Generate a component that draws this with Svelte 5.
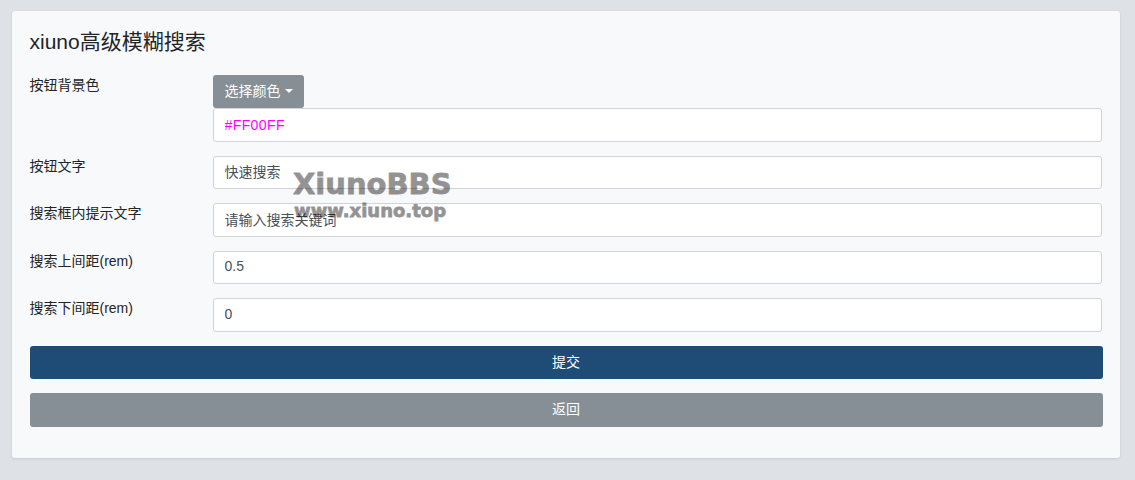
<script lang="ts">
	const fields = [
		{ label: '按钮文字', value: '快速搜索' },
		{ label: '搜索框内提示文字', value: '请输入搜索关键词' },
		{ label: '搜索上间距(rem)', value: '0.5' },
		{ label: '搜索下间距(rem)', value: '0' }
	];
</script>

<div class="page">
	<div class="card">
		<h4>xiuno高级模糊搜索</h4>
		<div class="row">
			<label for="color">按钮背景色</label>
			<div>
				<button class="btn secondary picker" type="button">选择颜色<span class="caret"></span></button>
				<input id="color" class="color" type="text" value="#FF00FF" />
			</div>
		</div>
		{#each fields as field, i}
			<div class="row">
				<label for={`field-${i}`}>{field.label}</label>
				<input id={`field-${i}`} type="text" value={field.value} />
			</div>
		{/each}
		<button class="btn primary block" type="button">提交</button>
		<button class="btn secondary block" type="button">返回</button>
	</div>
	<div class="watermark">
		<div class="wm-big">XiunoBBS</div>
		<div class="wm-small">www.xiuno.top</div>
	</div>
</div>

<style>
	:global(body) {
		margin: 0;
		background: #dee2e6;
	}

	.page {
		position: relative;
		padding: 11px 15px 0 12px;
		height: 469px;
		overflow: hidden;
		font-family: "Liberation Sans", "Noto Sans CJK SC", sans-serif;
		font-size: 14px;
		line-height: 1.5;
		color: #212529;
	}

	.card {
		background: #f8f9fa;
		border-radius: 3px;
		padding: 17.5px 17.5px 31.5px;
		box-shadow: 0 1px 3px rgba(0, 0, 0, 0.1);
	}

	h4 {
		margin: 0 0 21px;
		font-size: 21px;
		font-weight: 400;
		line-height: 1.2;
	}

	.row {
		display: grid;
		grid-template-columns: 183.5px 1fr;
		margin: 0 0.75px 14px 0;
	}

	input {
		display: block;
		box-sizing: border-box;
		width: 100%;
		height: 33.5px;
		padding: 4.25px 10.5px 6.25px;
		border: 1px solid #ced4da;
		border-radius: 3px;
		background: #fff;
		color: #495057;
		font: inherit;
		outline: none;
	}

	.color {
		padding: 5.25px 10.5px;
		color: #ff00ff;
		letter-spacing: 0.4px;
	}

	.btn {
		box-sizing: border-box;
		height: 33.5px;
		padding: 5.25px 10.5px;
		border: 1px solid transparent;
		border-radius: 3px;
		color: #fff;
		font: inherit;
		text-align: center;
	}

	.picker {
		display: block;
		width: 91px;
		white-space: nowrap;
	}

	.caret {
		display: inline-block;
		margin-left: 4px;
		vertical-align: 3px;
		border-top: 4.9px solid #fff;
		border-left: 4.9px solid transparent;
		border-right: 4.9px solid transparent;
	}

	.secondary {
		background: #868e96;
	}

	.primary {
		background: #1f4b77;
	}

	.block {
		display: block;
		width: 100%;
		margin-bottom: 14px;
	}

	.block:last-child {
		margin-bottom: 0;
	}

	.watermark {
		position: absolute;
		left: 293px;
		top: 167px;
		font-family: "DejaVu Sans", sans-serif;
		font-weight: 700;
		color: #000;
		opacity: 0.42;
		-webkit-text-stroke: 0.8px #000;
		pointer-events: none;
		white-space: nowrap;
	}

	.wm-big {
		font-size: 29px;
		line-height: 34px;
	}

	.wm-small {
		font-size: 18px;
		line-height: 19px;
		margin-left: 1px;
	}
</style>
